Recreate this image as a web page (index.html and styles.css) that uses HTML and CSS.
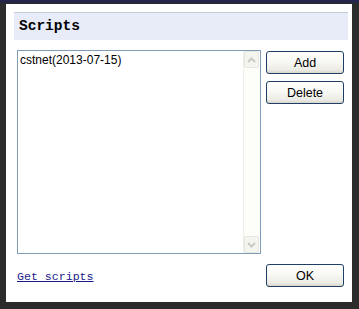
FILE: index.html
```html
<!DOCTYPE html>
<html>
<head>
<meta charset="utf-8">
<link rel="stylesheet" href="styles.css">
</head>
<body>
<div class="backdrop">
  <div class="dialog">
    <div class="title">Scripts</div>
    <div class="main">
      <div class="listbox">
        <div class="items">
          <div class="item">cstnet(2013-07-15)</div>
        </div>
        <div class="scrollbar">
          <div class="sbtn">
            <svg width="9" height="6" viewBox="0 0 9 6"><path d="M1 5 L4.5 1.5 L8 5" fill="none" stroke="#c9cbc4" stroke-width="2"/></svg>
          </div>
          <div class="track"></div>
          <div class="sbtn">
            <svg width="9" height="6" viewBox="0 0 9 6"><path d="M1 1 L4.5 4.5 L8 1" fill="none" stroke="#c9cbc4" stroke-width="2"/></svg>
          </div>
        </div>
      </div>
      <div class="actions">
        <button class="btn">Add</button>
        <button class="btn">Delete</button>
      </div>
    </div>
    <div class="footer">
      <a class="link" href="#">Get scripts</a>
      <button class="btn">OK</button>
    </div>
  </div>
</div>
</body>
</html>
```
FILE: styles.css
```css
html, body {
  margin: 0;
  padding: 0;
  background: #2c2c2c;
}
.backdrop {
  width: 359px;
  height: 309px;
  overflow: hidden;
  padding: 4px 7px 0 6px;
  box-sizing: border-box;
  background: linear-gradient(#23254a 0, #23254a 3px, #2c2c2c 3px);
}
.dialog {
  width: 346px;
  height: 298px;
  background: #ffffff;
  padding: 8px 4px 0 8px;
  box-sizing: border-box;
  display: flex;
  flex-direction: column;
}
.title {
  height: 28px;
  box-sizing: border-box;
  background: #e8ecf8;
  border-top: 1px solid #c3cadb;
  font-family: "Liberation Mono", monospace;
  font-weight: bold;
  font-size: 14.5px;
  line-height: 26px;
  padding-left: 5px;
  color: #000;
}
.main {
  display: flex;
  gap: 5px;
  margin-top: 10px;
  padding-left: 3px;
}
.listbox {
  width: 244px;
  height: 204px;
  box-sizing: border-box;
  border: 1px solid #7f9db9;
  display: flex;
}
.items {
  flex: 1;
  padding: 2px 2px;
}
.item {
  font-family: "Liberation Sans", sans-serif;
  font-size: 12px;
  line-height: 14px;
  color: #000;
}
.scrollbar {
  width: 17px;
  display: flex;
  flex-direction: column;
  background: #fdfdf9;
  border-left: 1px solid #eeeee8;
  box-sizing: border-box;
}
.sbtn {
  height: 17px;
  margin: 0 1px 0 0;
  border: 1px solid #e6e6df;
  border-radius: 2px;
  background: #f5f5ef;
  box-sizing: border-box;
  display: flex;
  align-items: center;
  justify-content: center;
}
.track {
  flex: 1;
}
.actions {
  display: flex;
  flex-direction: column;
  gap: 7px;
  padding-top: 1px;
}
.btn {
  width: 78px;
  height: 23px;
  border: 1px solid #1f3f66;
  border-radius: 3px;
  background: linear-gradient(#ffffff 0%, #f7f7f3 50%, #ecebe5 85%, #d8d6cc 100%);
  font-family: "Liberation Sans", sans-serif;
  font-size: 12.5px;
  color: #000;
  padding: 0;
  margin: 0;
}
.footer {
  display: flex;
  justify-content: space-between;
  align-items: center;
  margin-top: 10px;
  padding-left: 3px;
  width: 330px;
  box-sizing: border-box;
}
.link {
  font-family: "Liberation Mono", monospace;
  font-size: 11.6px;
  color: #1a1a8a;
  text-decoration: underline;
  padding-top: 1px;
}
```
